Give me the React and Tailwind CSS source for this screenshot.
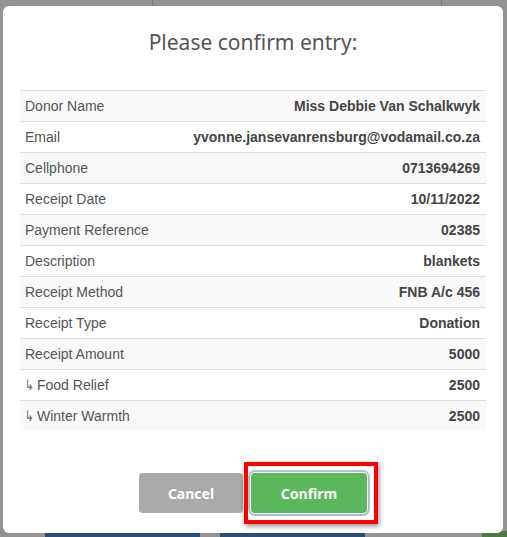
import React from "react";

const rows = [
  ["Donor Name", "Miss Debbie Van Schalkwyk"],
  ["Email", "yvonne.jansevanrensburg@vodamail.co.za"],
  ["Cellphone", "0713694269"],
  ["Receipt Date", "10/11/2022"],
  ["Payment Reference", "02385"],
  ["Description", "blankets"],
  ["Receipt Method", "FNB A/c 456"],
  ["Receipt Type", "Donation"],
  ["Receipt Amount", "5000"],
  ["Food Relief", "2500", true],
  ["Winter Warmth", "2500", true],
];

export default function App() {
  return (
    <div className="relative w-[507px] h-[537px] overflow-hidden bg-[#939393]">
      {/* faint background hints */}
      <div className="absolute top-0 left-[152px] w-px h-[8px] bg-[#7a7a7a]" />
      <div className="absolute top-0 left-[441px] w-px h-[8px] bg-[#7a7a7a]" />
      <div className="absolute bottom-0 left-[45px] w-[155px] h-[4px] bg-[#2a4f72]" />
      <div className="absolute bottom-0 left-[220px] w-[145px] h-[4px] bg-[#2a4f72]" />
      <div className="absolute bottom-0 left-[482px] w-[25px] h-[6px] bg-[#4f7a3d]" />

      <div className="absolute left-[3px] top-[6px] w-[500px] h-[527px] bg-white rounded-[6px] px-[17px] flex flex-col">
        <div className="h-[84px] flex items-center justify-center pb-[10px]">
          <h1
            className="text-[21px] text-[#555] font-normal"
            style={{ fontFamily: '"Noto Sans", "Open Sans", sans-serif' }}
          >
            Please confirm entry:
          </h1>
        </div>
        <div
          className="flex flex-col text-[14px]"
          style={{ fontFamily: '"Liberation Sans", Arial, sans-serif' }}
        >
          {rows.map(([k, v, sub], i) => (
            <div
              key={k}
              className={`flex items-center justify-between h-[31px] border-t border-[#dddddd] pl-[5px] pr-[6px] ${
                i % 2 === 0 ? "bg-[#f9f9f9]" : "bg-white"
              }`}
            >
              <span className="text-[#555] flex items-center">
                {sub && (
                  <span className="inline-block w-[12px] overflow-visible">
                    <span
                      className="inline-block text-[15px] leading-none text-[#666] scale-x-[0.7] origin-left"
                      style={{ fontFamily: '"DejaVu Sans", sans-serif' }}
                    >
                      ↳
                    </span>
                  </span>
                )}
                {k}
              </span>
              <span className="font-bold text-[#444]">{v}</span>
            </div>
          ))}
        </div>
        <div
          className="mt-[42px] flex justify-center gap-[8px]"
          style={{ fontFamily: '"Noto Sans", "Open Sans", sans-serif' }}
        >
          <button className="w-[104px] h-[40px] rounded-[4px] bg-[#aaaaaa] text-white font-bold text-[14px]">
            Cancel
          </button>
          <div className="relative">
            <div className="absolute -left-[7px] -right-[11px] -top-[11px] -bottom-[11px] border-[4px] border-[#ff0000] shadow-[1px_2px_5px_rgba(0,0,0,0.45)]" />
            <button className="relative w-[116px] h-[40px] rounded-[4px] bg-[#5cb85c] text-white font-bold text-[14px] ring-2 ring-[#aebfd2] ring-offset-1 ring-offset-white">
              Confirm
            </button>
          </div>
        </div>
      </div>
    </div>
  );
}
